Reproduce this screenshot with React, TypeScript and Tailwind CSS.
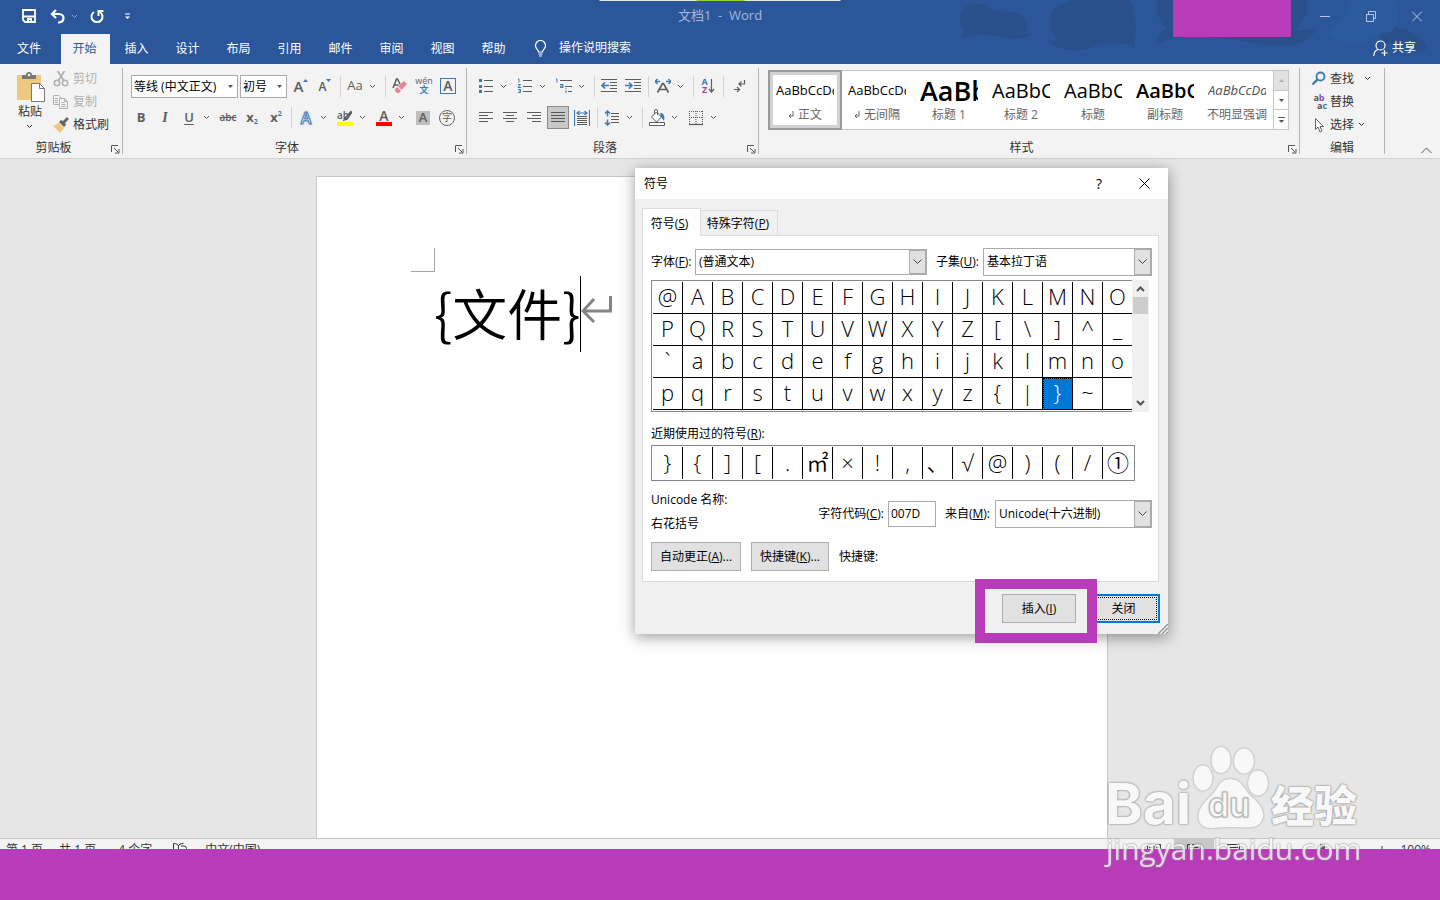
import type { ReactNode } from "react";

const tabs = ["插入", "设计", "布局", "引用", "邮件", "审阅", "视图", "帮助"];

const symbols = [
  ..."@ABCDEFGHIJKLMNO",
  ..."PQRSTUVWXYZ[\\]^_",
  ..."`abcdefghijklmno",
  ..."pqrstuvwxyz{|}~ ",
];

const recent = [..."}{][.㎡×!,、√@)(/①"];

const styles = [
  { sample: "AaBbCcDd", name: "正文", mark: true, look: "text-[13px] text-black" },
  { sample: "AaBbCcDd", name: "无间隔", mark: true, look: "text-[13px] text-black" },
  { sample: "AaBb", name: "标题 1", look: "text-[27px] font-semibold text-black" },
  { sample: "AaBbC", name: "标题 2", look: "text-xl text-black" },
  { sample: "AaBbC", name: "标题", look: "text-xl text-black" },
  { sample: "AaBbC", name: "副标题", look: "text-xl font-semibold text-black" },
  { sample: "AaBbCcDd", name: "不明显强调", look: "text-[13px] italic text-[#505050]" },
];

function Svg({ w = 16, h = 16, className = "", children }: { w?: number; h?: number; className?: string; children: ReactNode }) {
  return (
    <svg width={w} height={h} viewBox={`0 0 ${w} ${h}`} fill="none" stroke="currentColor" className={`shrink-0 ${className}`} aria-hidden="true">
      {children}
    </svg>
  );
}

function Tool({ label, children, className = "" }: { label: string; children: ReactNode; className?: string }) {
  return (
    <button aria-label={label} className={`flex h-6 w-6 shrink-0 items-center justify-center text-[#5c5c5c] ${className}`}>
      {children}
    </button>
  );
}

function Chevron({ className = "" }: { className?: string }) {
  return (
    <Svg w={7} h={5} className={className}>
      <path d="M1 1l2.500 2.500L6 1" />
    </Svg>
  );
}

function More({ label }: { label: string }) {
  return (
    <button aria-label={label} className="flex h-6 w-[15px] shrink-0 items-center pl-0.5 text-[#555]">
      <Chevron />
    </button>
  );
}

function Sep() {
  return (
    <div className="flex w-1.5 shrink-0 justify-center">
      <div className="h-[21px] w-px bg-[#d2d2d2]" />
    </div>
  );
}

function Group({ title, launcher = true, className = "", children }: { title: string; launcher?: boolean; className?: string; children: ReactNode }) {
  return (
    <section className={`flex flex-col border-r border-[#b5b5b5] pt-0.5 ${className}`}>
      <div className="h-[70px]">{children}</div>
      <div className="flex h-3.5 items-center">
        <h2 className="flex-1 pt-0.5 text-center leading-3.5 text-[#333]">{title}</h2>
        {launcher && (
          <button aria-label={`${title}设置`} className="w-[15px] pl-1 text-[#555]">
            <Svg w={9} h={9} className="mt-1">
              <path d="M.5 7V.5H7M3 3l4 4M8 4v4H4" />
            </Svg>
          </button>
        )}
      </div>
    </section>
  );
}

function TitleBar() {
  return (
    <header className="relative bg-[#2b579a] text-white">
      <svg className="absolute top-0 right-0 h-16 w-[490px]" viewBox="0 0 490 64" aria-hidden="true">
        <g fill="#29508b">
          <path d="M10 20C9 8 22 0 34 5 44 14 60 10 70 14 80 20 78 28 74 33L82 34C70 42 56 38 46 36 34 33 20 34 11 40L14 31Q10 27 10 20Z" />
          <path d="M100 18C104 4 116 3 124 0H180Q188 18 185 38L184 48C174 42 162 43 150 44 128 55 104 50 95 39Q98 42 108 40Q98 32 100 18Z" />
          <path d="M208 0H356Q362 12 344 30Q356 32 366 28C360 47 330 48 306 44 276 37 226 32 207 44Q208 34 216 28Q204 16 208 0Z" />
          <path d="M428 34Q436 22 448 28Q462 30 472 40Q482 50 470 52Q452 44 432 42Z" />
        </g>
        <path d="M402 0H446Q454 22 440 32Q424 34 416 44Q396 48 378 34Q394 20 402 0Z" fill="#2c5a9f" />
      </svg>
      <div className="absolute top-0 left-1/2 flex h-px w-[241px] -translate-x-1/2 justify-center bg-[#e6e6e6]">
        <div className="w-12 bg-[#9acd32]" />
      </div>

      <div className="relative grid h-8 grid-cols-3 items-center">
        <div className="flex items-center pl-[22px]">
          <button aria-label="保存" className="mr-3.5">
            <Svg w={14} h={14}>
              <path d="M1 1h12v12H3l-2-2z" strokeWidth="1.800" />
              <path d="M1 7.500h12M6 13v-3h3v3" strokeWidth="1.800" />
            </Svg>
          </button>
          <button aria-label="撤消" className="mr-1.5">
            <Svg w={15} h={15}>
              <path d="M2 5h7c6 0 6 8 0 8.500H8M6 1L2 5l4 4" strokeWidth="2.200" />
            </Svg>
          </button>
          <button aria-label="撤消选项" className="mr-3 text-[#8fabd4]">
            <Chevron />
          </button>
          <button aria-label="恢复" className="mr-5">
            <Svg w={14} h={15}>
              <path d="M4 3a5.500 5.500 0 1 0 6 0M8.500 7V2h5" strokeWidth="2" />
            </Svg>
          </button>
          <button aria-label="自定义快速访问工具栏">
            <Svg w={7} h={7}>
              <path d="M1 1h5" />
              <path d="M1 3.500h5L3.500 6z" fill="currentColor" stroke="none" />
            </Svg>
          </button>
        </div>
        <h1 className="text-center text-[13px] whitespace-pre text-[#a2b9dc]">文档1  -  Word</h1>
        <div className="flex items-center justify-end gap-9 pr-[18px] text-[#b4c7e4]">
          <button aria-label="最小化"><Svg w={10} h={11}><path d="M0 5.500h10" /></Svg></button>
          <button aria-label="还原"><Svg w={10} h={11}><path d="M.5 3.500h7v7h-7zM2.500 3V.5h7v7H8" /></Svg></button>
          <button aria-label="关闭"><Svg w={10} h={11}><path d="M0 .5l10 10M10 .5l-10 10" /></Svg></button>
        </div>
      </div>

      <nav className="relative flex h-8 items-center">
        <button className="w-[60px] pt-0.5 pr-0.5">文件</button>
        <button className="mt-0.5 h-[30px] w-[51px] border-x border-[#2b579a] bg-[#f3f3f3] pr-0.5 text-[#2b579a]">开始</button>
        {tabs.map((t) => (
          <button key={t} className="w-[51px] pt-0.5">{t}</button>
        ))}
        <button className="ml-[15px] flex items-center gap-3">
          <Svg w={13} h={17}>
            <path d="M4.500 12C4.500 9.500 1.500 9 1.500 5.500a5 5 0 0 1 10 0C11.500 9 8.500 9.500 8.500 12zM4.500 14h4M5 16h3" strokeWidth="1.200" />
          </Svg>
          操作说明搜索
        </button>
        <button className="mr-6 ml-auto flex items-center gap-1">
          <Svg w={15} h={17}>
            <circle cx="7.500" cy="5.500" r="4.500" strokeWidth="1.200" />
            <path d="M.8 16c0-4 2-6 4.500-6.500M11.500 10v6M8.500 13h6" strokeWidth="1.200" />
          </Svg>
          共享
        </button>
      </nav>
      <div className="absolute top-0 right-[149px] h-[37px] w-[118px] bg-[#b83bb9]" />
    </header>
  );
}

function Clipboard() {
  return (
    <Group title="剪贴板" className="w-[123px]">
      <div className="flex">
        <button className="ml-4 flex w-[30px] flex-col items-start text-[#333]">
          <Svg w={30} h={32}>
            <path d="M1 5h24v25H1z" fill="#eec87e" stroke="none" />
            <path d="M6 9V5h4a3 3 0 0 1 6 0h4v4z" fill="#777" stroke="none" />
            <circle cx="13" cy="5" r="1.200" fill="#f3f3f3" stroke="none" />
            <path d="M15.500 13.500h8l5 5v13h-13z" fill="#fff" stroke="#777" />
            <path d="M23.500 13.500v5h5" stroke="#777" />
          </Svg>
          <span className="ml-0.5 leading-5">粘贴</span>
          <Chevron className="mt-0.5 ml-2.5" />
        </button>
        <div className="ml-[7px] flex flex-col gap-1.5 text-[#b0b0b0]">
          <button className="flex h-[17px] items-center gap-1">
            <Svg>
              <path d="M4.500 0L11 10M11.500 0L5 10" strokeWidth="1.800" />
              <circle cx="4" cy="12" r="2.700" strokeWidth="1.500" />
              <circle cx="12" cy="12" r="2.700" strokeWidth="1.500" />
            </Svg>
            剪切
          </button>
          <button className="flex h-[17px] items-center gap-1">
            <Svg>
              <path d="M6 10.500H.5v-9H6L8.500 4M2 4.500h3M2 6.500h3M2 8.500h3M6.500 4.500h5l3 3v7h-8zM11.500 4.500v3h3M8.500 8.500h3M8.500 10.500h4M8.500 12.500h4" />
            </Svg>
            复制
          </button>
          <button className="flex h-[17px] items-center gap-1 text-[#333]">
            <Svg>
              <path d="M0 9l6-3 5 5-4 5z" fill="#eec87e" stroke="none" />
              <path d="M6 5l2-2 2 1 4-4 2 2-4 4 1 2-2 2z" fill="#666" stroke="none" />
            </Svg>
            格式刷
          </button>
        </div>
      </div>
    </Group>
  );
}

function RibbonSelect({ label, value, className }: { label: string; value: string; className: string }) {
  return (
    <div className={`relative mr-0.5 h-[23px] shrink-0 border border-[#ababab] bg-white ${className}`}>
      <select aria-label={label} className="h-full w-full appearance-none pt-px pl-0.5 text-black">
        <option>{value}</option>
      </select>
      <Svg w={5} h={3} className="pointer-events-none absolute top-[9px] right-1">
        <path d="M0 0h5L2.500 3z" fill="#555" stroke="none" />
      </Svg>
    </div>
  );
}

function FontGroup() {
  return (
    <Group title="字体" className="w-[344px]">
      <div className="flex h-8 items-center pl-2">
        <RibbonSelect label="字体" value="等线 (中文正文)" className="w-[107px]" />
        <RibbonSelect label="字号" value="初号" className="w-[47px]" />
        <Tool label="增大字号">
          <span className="text-[15px] font-semibold">A</span>
          <Svg w={5} h={3} className="mb-3 text-[#3e78b3]"><path d="M0 3h5L2.500 0z" fill="currentColor" stroke="none" /></Svg>
        </Tool>
        <Tool label="减小字号">
          <span className="pt-0.5 text-xs font-semibold">A</span>
          <Svg w={5} h={3} className="mb-3 text-[#3e78b3]"><path d="M0 0h5L2.500 3z" fill="currentColor" stroke="none" /></Svg>
        </Tool>
        <Sep />
        <Tool label="更改大小写" className="text-[13px] font-medium">Aa</Tool>
        <More label="更改大小写选项" />
        <Sep />
        <Tool label="清除所有格式">
          <Svg>
            <path d="M1 10L4.500 1h1L8 6M2.500 7h4" strokeWidth="1.500" />
            <path d="M3 11l2-2 4 4-2 2H5l-2-2z" fill="#e8879a" stroke="none" />
            <path d="M6 8l6-5 3 3-5.500 6z" fill="#e8879a" stroke="none" />
          </Svg>
        </Tool>
        <Tool label="拼音指南">
          <span className="flex flex-col items-center text-[9px] leading-2 font-medium">
            wén
            <span className="text-[9px] leading-2.5 font-bold text-[#3e78b3]">文</span>
          </span>
        </Tool>
        <Tool label="字符边框">
          <span className="flex h-4 w-4 items-center justify-center border border-[#3e78b3] text-sm font-semibold">A</span>
        </Tool>
      </div>
      <div className="flex h-[31px] items-center pl-1.5">
        <Tool label="加粗" className="text-[13px] font-bold">B</Tool>
        <Tool label="倾斜"><span className="font-['Liberation_Serif',serif] text-sm font-bold italic">I</span></Tool>
        <Tool label="下划线" className="text-[13px] font-semibold underline underline-offset-2">U</Tool>
        <More label="下划线选项" />
        <Tool label="删除线" className="text-[10px] font-semibold line-through">abc</Tool>
        <Tool label="下标" className="text-[13px] font-bold">
          x<span className="pt-2 text-[7px] text-[#3e78b3]">2</span>
        </Tool>
        <Tool label="上标" className="text-[13px] font-bold">
          x<span className="pb-2 text-[7px] text-[#3e78b3]">2</span>
        </Tool>
        <Sep />
        <Tool label="文本效果">
          <span className="text-base font-semibold text-white [-webkit-text-stroke:1px_#3e78b3] [text-shadow:0_0_3px_#7fb0e0]">A</span>
        </Tool>
        <More label="文本效果选项" />
        <Tool label="突出显示">
          <span className="flex w-4 flex-col">
            <span className="flex h-3 items-center text-[10px] font-semibold">
              ab
              <Svg w={9} h={11} className="-ml-1.5"><path d="M8.500 1L3 7l-2 3 3-1 5-7" strokeWidth="1.500" /></Svg>
            </span>
            <span className="h-1 bg-[#ff0]" />
          </span>
        </Tool>
        <More label="突出显示选项" />
        <Tool label="字体颜色">
          <span className="flex w-4 flex-col items-center text-sm leading-3 font-semibold">
            A<span className="h-1 w-4 bg-[#f00]" />
          </span>
        </Tool>
        <More label="字体颜色选项" />
        <Tool label="字符底纹">
          <span className="flex h-3.5 w-3.5 items-center justify-center bg-[#bebebe] text-[13px] font-semibold">A</span>
        </Tool>
        <Tool label="带圈字符">
          <span className="flex h-4 w-4 items-center justify-center rounded-full border border-[#666] text-[10px]">字</span>
        </Tool>
      </div>
    </Group>
  );
}

function ParagraphGroup() {
  return (
    <Group title="段落" className="w-[292px]">
      <div className="flex h-8 items-center pl-[7px]">
        <Tool label="项目符号">
          <Svg>
            <path d="M1 2.500h3M1 8.500h3M1 13.500h3" stroke="#3e78b3" strokeWidth="3" />
            <path d="M6 2.500h9M6 8.500h9M6 13.500h9" />
          </Svg>
        </Tool>
        <More label="项目符号选项" />
        <Tool label="编号">
          <Svg>
            <path d="M1 1h1v3.500M1 6.500h2.500L1 9.500h3M1 11.500h2.500v3H1M2 13h1.500" stroke="#3e78b3" />
            <path d="M6 2.500h9M6 8.500h9M6 13.500h9" />
          </Svg>
        </Tool>
        <More label="编号选项" />
        <Tool label="多级列表">
          <Svg>
            <path d="M0 1h1v3.500M4 6.500h3v3H4.500V8H7M10 12v3M10 10v1" stroke="#3e78b3" />
            <path d="M4 2.500h12M9 8.500h7M12 13.500h4" />
          </Svg>
        </Tool>
        <More label="多级列表选项" />
        <Sep />
        <Tool label="减少缩进量">
          <Svg>
            <path d="M0 1.500h16M9 4.500h7M9 7.500h7M9 10.500h7M0 13.500h16" />
            <path d="M8 7.500H1M4 4.500l-3 3 3 3" stroke="#3e78b3" strokeWidth="1.700" />
          </Svg>
        </Tool>
        <Tool label="增加缩进量">
          <Svg>
            <path d="M0 1.500h16M9 4.500h7M9 7.500h7M9 10.500h7M0 13.500h16" />
            <path d="M0 7.500h7M4 4.500l3 3-3 3" stroke="#3e78b3" strokeWidth="1.700" />
          </Svg>
        </Tool>
        <Sep />
        <Tool label="中文版式">
          <Svg>
            <path d="M2.500 14.500L7.500 5.500h1l5 9M4.500 11.500h7" strokeWidth="1.600" />
            <path d="M0 3.500h5M2.500 1L0 3.500 2.500 6M16 3.500h-5M13.500 1L16 3.500 13.500 6" stroke="#3e78b3" strokeWidth="1.300" />
          </Svg>
        </Tool>
        <More label="中文版式选项" />
        <Sep />
        <Tool label="排序">
          <span className="flex flex-col text-[9px] leading-2 font-bold text-[#3e78b3]">
            A<span className="text-[#8a4fb0]">Z</span>
          </span>
          <Svg w={7} h={16}><path d="M3.500 1v13M1 11l2.500 3L6 11" strokeWidth="1.200" /></Svg>
        </Tool>
        <Sep />
        <Tool label="显示编辑标记" className="pl-1">
          <Svg>
            <path d="M12.500 2v4H7M9.500 3.500L7 6l2.500 2.500M2 11.500h5M5 9l2.500 2.500L5 14" strokeWidth="1.200" />
          </Svg>
        </Tool>
      </div>
      <div className="flex h-[31px] items-center pl-[7px]">
        <Tool label="左对齐"><Svg><path d="M1 2.500h14M1 5.500h9M1 8.500h14M1 11.500h9" /></Svg></Tool>
        <Tool label="居中"><Svg><path d="M1 2.500h14M4 5.500h8M1 8.500h14M4 11.500h8" /></Svg></Tool>
        <Tool label="右对齐"><Svg><path d="M1 2.500h14M6 5.500h9M1 8.500h14M6 11.500h9" /></Svg></Tool>
        <div className="flex w-6 justify-center">
          <button aria-label="两端对齐" className="flex h-[23px] w-[22px] items-center justify-center border border-[#8a8a8a] bg-[#c8c8c8] text-[#555]">
            <Svg><path d="M1 2.500h14M1 5.500h14M1 8.500h14M1 11.500h14" /></Svg>
          </button>
        </div>
        <Tool label="分散对齐">
          <Svg>
            <path d="M.5 0v16M15.500 0v16M3 3h10M5.500 1L3 3l2.500 2M10.500 1L13 3l-2.500 2" stroke="#3e78b3" strokeWidth="1.200" />
            <path d="M3 6.500h10M3 8.500h10M3 10.500h10M3 12.500h10M3 14.500h10" />
          </Svg>
        </Tool>
        <Sep />
        <Tool label="行和段落间距">
          <Svg>
            <path d="M7 3.500h8M7 6.500h8M7 9.500h8M7 12.500h8" />
            <path d="M3.500 1v5.500M3.500 9.500V15M1 3.500L3.500 1 6 3.500M1 12.500L3.500 15 6 12.500" stroke="#3e78b3" strokeWidth="1.500" />
          </Svg>
        </Tool>
        <More label="行距选项" />
        <Sep />
        <Tool label="底纹">
          <Svg h={17}>
            <path d="M2.500 8l5-5 5 5-5 5zM5.500 5V2a1.500 1.500 0 0 1 3 0v4" fill="#fff" />
            <path d="M11 4c4 0 5 3 4 8l-3-4z" fill="#3e78b3" stroke="none" />
            <path d="M.5 13.500h15v3H.5z" fill="#fff" />
          </Svg>
        </Tool>
        <More label="底纹选项" />
        <Tool label="边框">
          <Svg>
            <path d="M1.500 1v13M14.500 1v13M8 1v13M1 1.500h14M1 7.500h14" strokeDasharray="1 1" />
            <path d="M1 14.500h14" strokeWidth="1.200" />
          </Svg>
        </Tool>
        <More label="边框选项" />
      </div>
    </Group>
  );
}

function StylesGroup() {
  return (
    <Group title="样式" className="min-w-0 flex-1">
      <div className="mr-2.5 ml-[9px] flex h-[60px] border border-[#c6c6c6] bg-white">
        {styles.map((s, i) => (
          <button
            key={s.name}
            className={
              "flex min-w-0 flex-1 flex-col items-center " +
              (i === 0 ? "outline-2 -outline-offset-1 outline-[#9a9a9a] shadow-[inset_0_0_0_4px_#d2d2d2]" : "")
            }
          >
            <span className={`flex h-10 w-[58px] items-center overflow-hidden whitespace-nowrap ${s.look}`}>{s.sample}</span>
            <span className="flex items-center gap-1 leading-2 whitespace-nowrap text-[#666]">
              {s.mark && (
                <Svg w={6} h={8}>
                  <path d="M5 0v5H1M3 3L1 5l2 2" />
                </Svg>
              )}
              {s.name}
            </span>
          </button>
        ))}
        <div className="flex w-[15px] shrink-0 flex-col border-l border-[#c6c6c6] text-[#555]">
          <button aria-label="上一行" className="flex flex-1 items-center justify-center bg-[#e1e1e1] text-[#b0b0b0]">
            <Svg w={5} h={3}><path d="M0 3h5L2.500 0z" fill="currentColor" stroke="none" /></Svg>
          </button>
          <button aria-label="下一行" className="flex flex-1 items-center justify-center border-y border-[#c6c6c6]">
            <Svg w={5} h={3}><path d="M0 0h5L2.500 3z" fill="currentColor" stroke="none" /></Svg>
          </button>
          <button aria-label="更多样式" className="flex flex-1 items-center justify-center">
            <Svg w={7} h={6}>
              <path d="M0 .5h7" />
              <path d="M1 3h5L3.500 6z" fill="currentColor" stroke="none" />
            </Svg>
          </button>
        </div>
      </div>
    </Group>
  );
}

function EditGroup() {
  return (
    <Group title="编辑" launcher={false} className="w-[85px] text-[#333]">
      <div className="flex flex-col gap-1.5 pl-[11px]">
        <button className="flex h-[17px] items-center">
          <Svg className="mr-[3px]">
            <circle cx="9.500" cy="5.500" r="4" stroke="#3e78b3" strokeWidth="1.800" />
            <path d="M6.500 8.500L1.500 13.500" stroke="#3e78b3" strokeWidth="2.400" />
          </Svg>
          查找
          <Chevron className="ml-2.5" />
        </button>
        <button className="flex h-[17px] items-center">
          <span className="mr-[3px] flex w-4 flex-col text-[9px] leading-2 font-bold text-[#555]">
            <span>a<span className="text-[#8a4fb0]">b</span></span>
            <span className="pl-1.5">a<span className="text-[#3e78b3]">c</span></span>
          </span>
          替换
        </button>
        <button className="flex h-[17px] items-center">
          <Svg className="mr-[3px]">
            <path d="M4.500 1.500v11l2.500-2.500 2 5 2-1-2-4.500h3.500z" stroke="#666" fill="#fff" />
          </Svg>
          选择
          <Chevron className="ml-1" />
        </button>
      </div>
    </Group>
  );
}

function DialogSelect({ id, value, className }: { id: string; value: string; className: string }) {
  return (
    <div className={`relative flex border border-[#ababab] bg-white ${className}`}>
      <select id={id} className="h-full w-full appearance-none pl-[3px] text-black">
        <option>{value}</option>
      </select>
      <div className="pointer-events-none absolute inset-y-0 right-0 flex w-[17px] items-center justify-center border border-[#ababab] bg-[#e1e1e1] text-[#444]">
        <Svg w={9} h={6}><path d="M.5 .5l4 4 4-4" /></Svg>
      </div>
    </div>
  );
}

const cell = "flex h-8 items-center justify-center border-r border-black pb-[3px] text-[22px] leading-none font-[350]";

function SymbolDialog() {
  return (
    <div role="dialog" aria-label="符号" className="absolute top-[9px] left-[635px] w-[533px] bg-[#f0f0f0] text-black shadow-[0_3px_14px_rgba(0,0,0,0.4)]">
      <div className="flex h-[31px] items-center bg-white pl-[9px]">
        <h2 className="flex-1">符号</h2>
        <button aria-label="帮助" className="w-6 text-sm">?</button>
        <button aria-label="关闭窗口" className="mr-[18px] ml-7">
          <Svg w={11} h={11}><path d="M.5 .5l10 10M10.500 .5l-10 10" /></Svg>
        </button>
      </div>

      <div className="flex items-end pt-[9px] pl-[7px]">
        <button className="relative -mb-px h-7 w-[59px] border border-b-0 border-[#dcdcdc] bg-white pr-1 pt-0.5">符号(<u>S</u>)</button>
        <button className="h-[25px] w-[77px] border border-b-0 border-l-0 border-[#dcdcdc] pt-0.5 pr-0.5">特殊字符(<u>P</u>)</button>
      </div>

      <div className="mr-[9px] ml-[7px] border border-[#dcdcdc] bg-white pt-3 pr-1.5 pb-2.5 pl-2">
        <div className="flex h-7 items-center">
          <label htmlFor="font" className="w-11">字体(<u>F</u>):</label>
          <DialogSelect id="font" value="(普通文本)" className="h-[26px] w-[232px]" />
          <label htmlFor="subset" className="mr-auto ml-[9px]">子集(<u>U</u>):</label>
          <DialogSelect id="subset" value="基本拉丁语" className="h-7 w-[169px]" />
        </div>

        <div className="mt-1 flex">
          <div className="grid h-[132px] w-[481px] grid-cols-[repeat(16,30px)] content-start overflow-hidden border border-r-0 border-[#828790] pt-px pl-px">
            {symbols.map((c, i) => (
              <button
                key={i}
                className={
                  cell + " border-b" + (c === "}" ? " bg-[#0078d7] text-white outline-1 -outline-offset-1 outline-dotted outline-black" : "")
                }
              >
                {c}
              </button>
            ))}
          </div>
          <div className="flex w-[17px] flex-col items-center bg-[#f0f0f0] py-1.5 text-[#555]">
            <Svg w={9} h={6}><path d="M1 5l3.500-3.500L8 5" strokeWidth="2" /></Svg>
            <div className="mt-[5px] mb-auto h-[17px] w-[15px] bg-[#cdcdcd]" />
            <Svg w={9} h={6}><path d="M1 1l3.500 3.500L8 1" strokeWidth="2" /></Svg>
          </div>
        </div>

        <h3 className="mt-3 h-5 leading-5">近期使用过的符号(<u>R</u>):</h3>
        <div className="mt-px grid h-9 w-[484px] grid-cols-[repeat(16,30px)] border border-[#828790] py-px pl-px">
          {recent.map((c, i) => (
            <button key={i} className={cell + " last:border-r-0"}>{c}</button>
          ))}
        </div>

        <div className="mt-[7px] flex items-center">
          <div className="flex-1 leading-6">
            <p>Unicode 名称:</p>
            <p>右花括号</p>
          </div>
          <div className="flex items-center pt-[3px]">
            <label htmlFor="code">字符代码(<u>C</u>):</label>
            <input id="code" defaultValue="007D" className="mr-[9px] ml-1 h-[26px] w-12 border border-[#ababab] bg-white pl-0.5" />
            <label htmlFor="from" className="mr-[5px]">来自(<u>M</u>):</label>
            <DialogSelect id="from" value="Unicode(十六进制)" className="h-7 w-[157px]" />
          </div>
        </div>

        <div className="mt-1.5 flex items-center gap-2.5">
          <button className="h-[29px] w-[90px] border border-[#adadad] bg-[#e1e1e1]">自动更正(<u>A</u>)...</button>
          <button className="h-[29px] w-[78px] border border-[#adadad] bg-[#e1e1e1]">快捷键(<u>K</u>)...</button>
          <span>快捷键:</span>
        </div>
      </div>

      <div className="relative flex justify-end gap-[11px] pt-3 pr-2 pb-[11px]">
        <button className="h-[29px] w-[74px] border border-[#adadad] bg-[#e1e1e1]">插入(<u>I</u>)</button>
        <button className="h-[29px] w-[73px] border-2 border-[#0078d7] bg-[#e1e1e1] outline-1 -outline-offset-4 outline-dotted outline-black">关闭</button>
        <div className="pointer-events-none absolute -top-[3px] right-[71px] h-16 w-[122px] border-10 border-[#b83bb9]" />
        <Svg w={10} h={10} className="absolute right-0 bottom-0 text-[#999]">
          <path d="M0 10L10 0M4 10l6-6M8 10l2-2" strokeWidth="1.500" />
        </Svg>
      </div>
    </div>
  );
}

function StatusBar() {
  return (
    <footer className="relative h-[62px] border-t border-[#c6c6c6] bg-[#f3f3f3] text-[#333]">
      <div className="flex h-[21px] items-center pl-1.5">
        <span className="mr-4">第 1 页</span>
        <span className="mr-[22px]">共 1 页</span>
        <span className="mr-5">4 个字</span>
        <Svg className="mr-[17px]"><path d="M1.500 1.500c3 0 5 1 5 3v8c0-2-2-3-5-3zM6.500 4.500c0-2 2-3 5-3M9 4h3a2 2 0 0 1 0 5l-3 3" /></Svg>
        <span>中文(中国)</span>
        <button aria-label="阅读视图" className="ml-auto flex w-10 justify-center">
          <Svg><path d="M1.500 2.500h5l1.500 1 1.500-1h5v11H1.500zM8 3.500v10M3 5.500h3M3 8.500h3M10 5.500h3M10 8.500h3" /></Svg>
        </button>
        <button aria-label="页面视图" className="flex h-full w-10 items-center justify-center bg-[#c8c8c8]">
          <Svg><path d="M1.500 2.500h13v11h-13zM4 5.500h8M4 8.500h8" /></Svg>
        </button>
        <button aria-label="Web 版式视图" className="mr-1 flex w-10 justify-center">
          <Svg><path d="M1.500 2.500h12v11h-12zM4 5.500h8M4 8.500h5" /></Svg>
        </button>
        <button aria-label="缩小"><Svg w={8} h={8}><path d="M0 4h8" /></Svg></button>
        <div className="mx-2 flex w-24 items-center justify-center bg-[linear-gradient(#999,#999)] bg-[length:100%_1px] bg-center bg-no-repeat">
          <div className="h-3 w-[5px] bg-[#555]" />
        </div>
        <button aria-label="放大"><Svg w={8} h={8}><path d="M0 4.500h8M4 0v8" /></Svg></button>
        <span className="mr-[9px] ml-3.5">100%</span>
      </div>
      <div className="absolute inset-x-0 bottom-0 h-[51px] bg-[#b83bb9]" />
    </footer>
  );
}

function Watermark() {
  return (
    <div className="pointer-events-none absolute right-[77px] bottom-[30px] h-[126px] w-[258px] text-[#f8f8f8] [text-shadow:0_0_2px_#888,0_0_2px_#999]">
      <span className="absolute top-[31px] left-0 font-[Inter,sans-serif] text-[57px] leading-none font-bold">Bai</span>
      <svg className="absolute top-0 left-[83px] drop-shadow-[0_0_1px_#999]" width="82" height="90" viewBox="0 0 82 90" fill="currentColor" aria-hidden="true">
        <ellipse cx="15" cy="34" rx="9.500" ry="12.500" />
        <ellipse cx="33" cy="16" rx="9.500" ry="13" />
        <ellipse cx="56" cy="17" rx="10" ry="12.500" />
        <ellipse cx="70" cy="39" rx="10" ry="12.500" />
        <path d="M42 35C54 35 56 46 64 53 74 62 78 70 73 78 68 86 56 83 42 83 30 83 18 87 12 79 7 70 14 60 22 53 30 46 31 35 42 35Z" />
      </svg>
      <span className="absolute top-[44px] left-[103px] font-[Inter,sans-serif] text-[34px] leading-none font-semibold [-webkit-text-stroke:1px_#b8b8b8]">du</span>
      <span className="absolute top-[40px] left-[166px] text-[43px] leading-none font-black">经验</span>
      <span className="absolute top-[90px] left-px text-[30px] leading-none opacity-80">jingyan.baidu.com</span>
    </div>
  );
}

export default function App() {
  return (
    <div className="relative flex h-screen flex-col overflow-hidden bg-[#e6e6e6] font-['Open_Sans','Noto_Sans_CJK_SC',sans-serif] text-xs">
      <TitleBar />
      <div className="flex border-b border-[#d2d2d2] bg-[#f3f3f3] py-1">
        <Clipboard />
        <FontGroup />
        <ParagraphGroup />
        <StylesGroup />
        <EditGroup />
        <button aria-label="折叠功能区" className="mr-2 ml-auto self-end pl-9 text-[#555]">
          <Svg w={11} h={7}><path d="M.5 6l5-5 5 5" /></Svg>
        </button>
      </div>

      <main className="relative flex min-h-0 flex-1 justify-center pt-[17px] pr-4">
        <article className="w-full max-w-[792px] border border-b-0 border-[#c6c6c6] bg-white">
          <div className="mt-[71px] ml-[94px] h-6 w-6 border-r border-b border-[#a6a6a6]" />
          <div className="mt-1 ml-[117px] flex items-start">
            <p className="font-['Noto_Sans_CJK_SC',sans-serif] text-[55px] leading-[70px] font-[350] whitespace-nowrap text-black">{"{文件}"}</p>
            <div className="h-[76px] w-px bg-black" />
            <Svg w={31} h={30} className="mt-[18px] text-[#848484]">
              <path d="M29.500 2v15H2M13 5L2 17l11 11" strokeWidth="3" />
            </Svg>
          </div>
        </article>
        <SymbolDialog />
      </main>

      <StatusBar />
      <Watermark />
    </div>
  );
}
